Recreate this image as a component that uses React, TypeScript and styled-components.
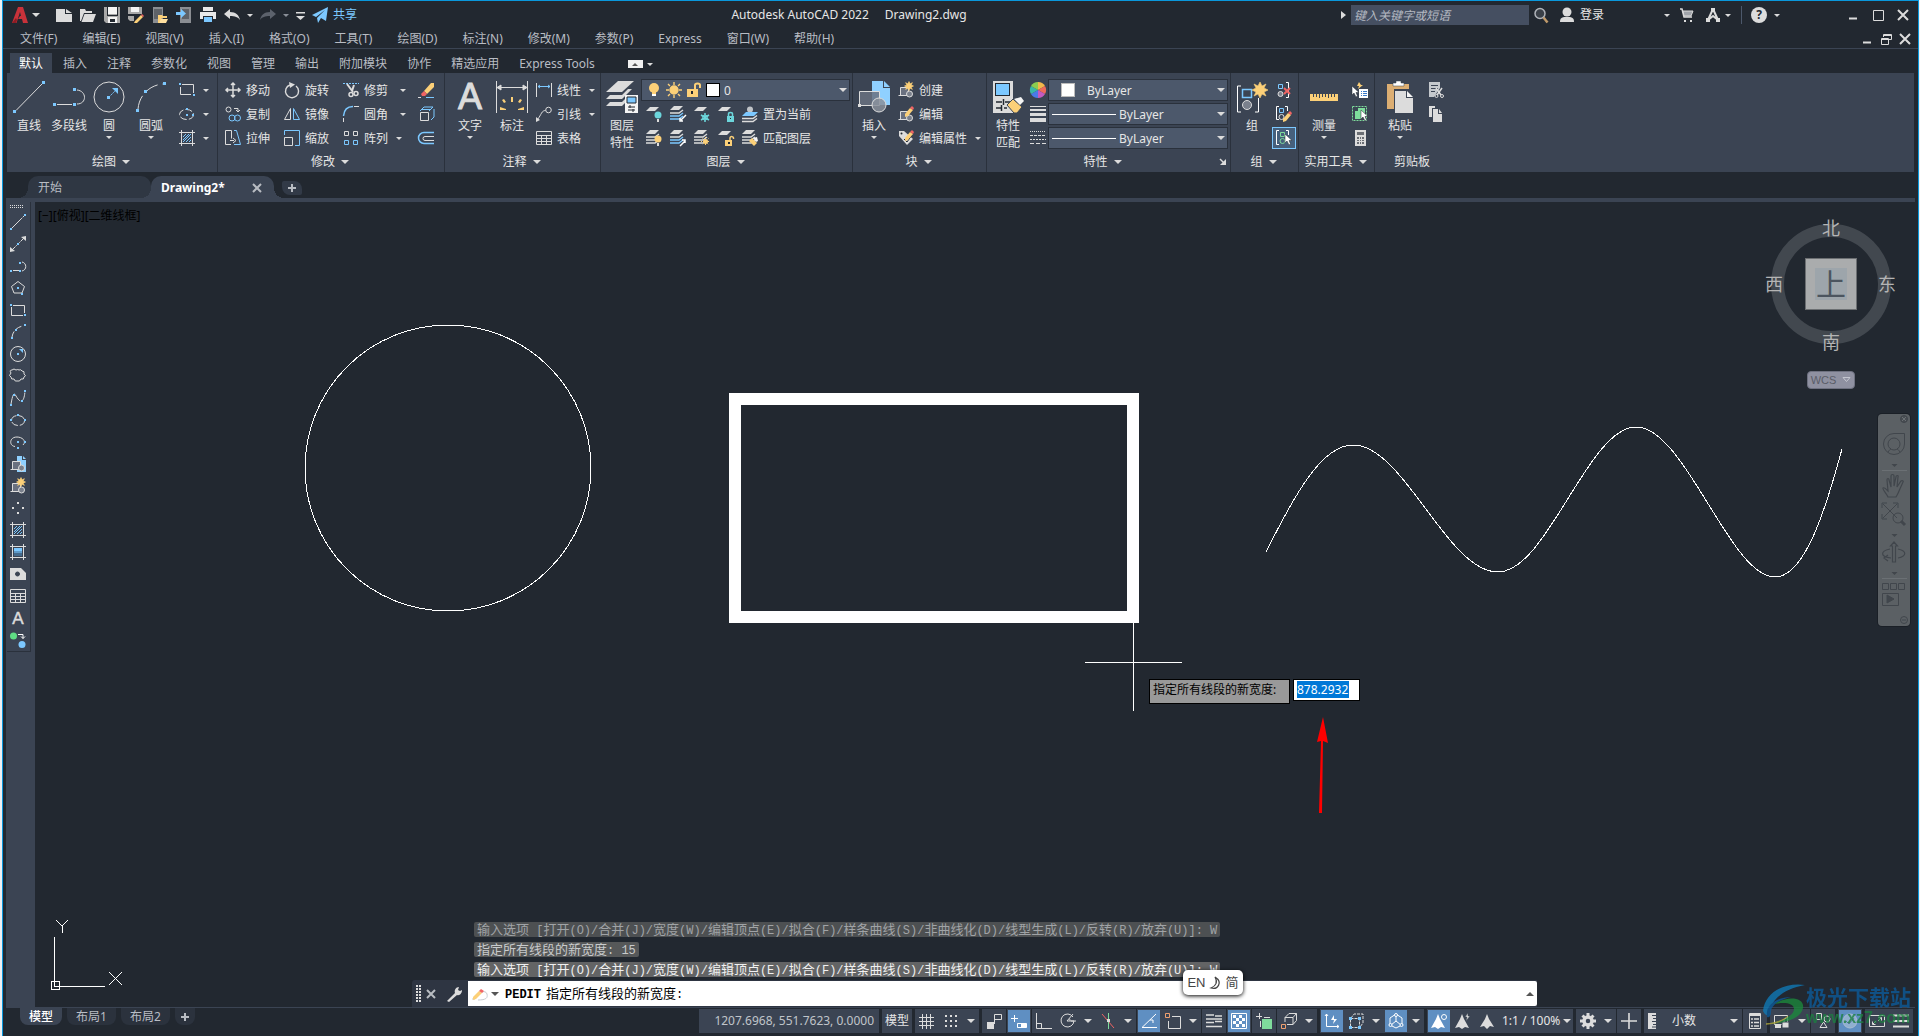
import React from "react";
import styled, { createGlobalStyle, css } from "styled-components";

const C = {
  bg: "#222830",
  bar: "#3b4453",
  field: "#4c586b",
  ink: "#dcdcdc",
  blue: "#7cc8ff",
  yellow: "#fcd078",
  teal: "#6cd6dc",
  green: "#7fdc9c",
  red: "#f06464",
  dark: "#222830",
  active: "#5f8fc2",
};

const UI = `"Noto Sans", "Noto Sans CJK SC", sans-serif`;

const GlobalStyle = createGlobalStyle`
  *, *::before, *::after { box-sizing: border-box; }
  body { margin: 0; background: #eef1f4; font: 12px/16px ${UI}; color: #e6e6e6; overflow: hidden; }
  button, input, select { font: inherit; color: inherit; border: 0; margin: 0; padding: 0; background: none; outline: none; border-radius: 0; }
  button { display: flex; align-items: center; justify-content: center; white-space: nowrap; flex: none; cursor: pointer; }
  svg { display: block; flex: none; overflow: visible; }
`;

/* ---------- icons ---------- */

const sq = (x: number, y: number, s = 2, f = C.blue) => (
  <rect key={`${x}-${y}-${f}`} x={x} y={y} width={s} height={s} fill={f} stroke="none" />
);
const sheet = (y: number, f: string = C.ink, x = 0) => (
  <path key={`s${y}`} d={`M${x + 4} ${y}h9l-4 4h-9z`} fill={f} stroke="none" />
);
const edge = (y: number, f: string = C.ink) => <path key={`e${y}`} d={`M0 ${y}h9l4-3`} stroke={f} strokeWidth="1.4" />;
const pencil = (
  <g stroke="none">
    <path d="M7 12l5-6 3 2-5 6-3 1z" fill={C.yellow} />
    <path d="M12 6l2-2 2 2-1 2z" fill={C.red} />
  </g>
);
const blockShape = (
  <g>
    <path d="M2.500 13.500v-8h8v8h-10" fill="#6a7180" />
    <circle cx="11.500" cy="12" r="3" fill="#7a808c" />
  </g>
);
const star = (x: number, y: number, r: number) => (
  <path
    d={`M${x} ${y - r}l${r * 0.25} ${r * 0.5}l${r * 0.5}-${r * 0.25}l-${r * 0.25} ${r * 0.5}l${r * 0.5} ${r * 0.25}l-${r * 0.5} ${r * 0.25}l${r * 0.25} ${r * 0.5}l-${r * 0.5}-${r * 0.25}l-${r * 0.25} ${r * 0.5}l-${r * 0.25}-${r * 0.5}l-${r * 0.5} ${r * 0.25}l${r * 0.25}-${r * 0.5}l-${r * 0.5}-${r * 0.25}l${r * 0.5}-${r * 0.25}l-${r * 0.25}-${r * 0.5}l${r * 0.5} ${r * 0.25}z`}
    fill={C.yellow}
    stroke={C.yellow}
    strokeWidth="0.6"
  />
);
const cursorArrow = (x: number, y: number) => (
  <path d={`M${x} ${y}v9l2-2 2 4 1.500-1-1.500-3.500h3z`} fill="#fff" stroke={C.dark} strokeWidth="0.5" />
);
const hatchFrame = (fill: React.ReactNode) => (
  <g>
    {fill}
    <path d="M2.500 0v16M13.500 0v16M0 2.500h16M0 13.500h16" />
  </g>
);
const scaleFigure = <path d="M8 1l2 5 5 8-4-1-3 3-3-3-4 1 5-8z" fill={C.ink} stroke="none" />;

const ICONS: Record<string, [number, React.ReactNode]> = {
  logo: [16, <g stroke="none"><path d="M0 16L6 0h5l5 16h-5l-1-4H6l2-3h1L8 5 4.500 16z" fill="#c8323a" /><path d="M0 16l4-5 1 2-1 3z" fill="#8c1c24" /></g>],
  newFile: [16, <g stroke="none" fill={C.ink}><path d="M0 2h9v5h7v8H0z" /><path d="M10 2l6 4h-6z" /></g>],
  open: [16, <path d="M0 2h5l1 2h6v2H4L1 14H0zM4.500 7H16l-3 8H1.500z" fill={C.ink} stroke="none" />],
  save: [16, <g stroke="none"><path d="M0 0h16v16H2l-2-2z" fill="#a8a8a8" /><path d="M4 0h9v7H4zM4 10h9v6H4z" fill="#f4f4f4" /><path d="M6 12h5v3H6z" fill={C.bg} /><path d="M3 0h1v8h9V0h1v9H3z" fill={C.bg} /></g>],
  saveAs: [16, <g stroke="none"><path d="M0 0h14v7H0zM0 9h6v5H2l-2-2z" fill="#a8a8a8" /><path d="M3 0h8v5H3z" fill="#f4f4f4" /><path d="M7 14l6-6 2 2-6 6H6z" fill={C.yellow} /><path d="M13 8l1-1 2 2-1 1z" fill={C.red} /></g>],
  webOpen: [16, <g stroke="none"><path d="M1 0h10v16H1z" fill="#8a8d92" /><path d="M2 2h8v10H2z" fill="#5e6268" /><path d="M6 8h4l1 1h4v2h-5l-2 5H6z" fill={C.yellow} /><path d="M9 12h7l-2 4H7z" fill="#ffe0a0" /></g>],
  webSave: [16, <g stroke="none"><path d="M4 0h11v16H4z" fill="#8a8d92" /><path d="M6 2h7v10H6z" fill="#5e6268" /><path d="M0 5h5V2l5 4.500L5 11V8H0z" fill={C.blue} /></g>],
  print: [16, <g stroke="none"><path d="M3 0h10v4H3zM0 5h16v7H0z" fill="#e8e8e8" /><path d="M3 9h10v6H3z" fill={C.bg} /><path d="M4 10h8v5H4z" fill={C.blue} /></g>],
  undo: [16, <path d="M0 7l6-5v3c6 0 9 3 10 8-2-3-5-4-10-4v3z" fill={C.ink} stroke="none" />],
  redo: [16, <path d="M16 7l-6-5v3C4 5 1 8 0 13c2-3 5-4 10-4v3z" fill="#5c626c" stroke="none" />],
  customise: [16, <g stroke="none" fill={C.ink}><path d="M4 5h9v1.500H4z" /><path d="M4 9h9l-4.500 4z" /></g>],
  plane: [16, <g stroke="none" fill={C.blue}><path d="M0 8L16 0l-2 14-5-3-3 5-1-5 8-8-9 7z" /></g>],
  search: [16, <g><circle cx="7" cy="6.500" r="5" stroke="#b0b4ba" strokeWidth="1.500" fill="#3a4048" /><path d="M10.500 10.500l4 5" stroke="#c09a6a" strokeWidth="2.500" /></g>],
  user: [16, <g stroke="none" fill={C.ink}><circle cx="8" cy="5" r="4.500" /><path d="M1 15c0-5 3-5 7-5s7 0 7 5z" /></g>],
  cart: [16, <g><path d="M1 2h2l2 8h8" strokeWidth="1.500" /><path d="M4 4h10l-2 5H5z" fill="#a0a4aa" /><path d="M5 13h2v2H5zM11 13h2v2h-2z" fill={C.ink} stroke="none" /></g>],
  appStore: [16, <g><path d="M8 2l-5 11M8 2l5 11M3 13l5-4 5 4" strokeWidth="2" /><path d="M6 1h4v4H6zM1 11h4v4H1zM11 11h4v4h-4z" fill={C.ink} stroke="none" /></g>],
  min: [12, <path d="M2 9.500h8" strokeWidth="2" />],
  max: [12, <path d="M1.500 1.500h10v10h-10z" />],
  close: [12, <path d="M1 1l10 10M11 1L1 11" strokeWidth="2" />],
  restore: [12, <path d="M3.500 4V1.500h8v5H9M1.500 5.500h7v6h-7zM1 6.500h8M3 2.500h9" />],
  line32: [32, <g><path d="M3 29.500L29 3" />{sq(0, 29, 3)}{sq(29, 0, 3)}</g>],
  pline32: [32, <g><path d="M4 23.500h15M24 9c10 1 10 14 0 14" />{sq(0, 22, 3)}{sq(20, 22, 3)}{sq(20, 7, 3)}</g>],
  circle32: [32, <g><circle cx="16" cy="16" r="15" /><path d="M16 16l7-7" stroke={C.blue} strokeDasharray="2 1" />{sq(14, 15, 3)}<path d="M25 7v6l-6-6z" fill={C.blue} stroke="none" /></g>],
  arc32: [32, <g><path d="M3 28C4 15 14 4 28 3" strokeDasharray="14 5" />{sq(1, 28, 3)}{sq(9, 9, 3)}{sq(28, 1, 3)}</g>],
  rect: [16, <g><path d="M3 2.500h11.500V11M1.500 5v7.500H12" />{sq(0, 1)}{sq(14, 12)}</g>],
  rectBar: [16, <g><path d="M3 3.500h11.500V11M1.500 5v8.500H13" />{sq(0, 2)}{sq(14, 12)}</g>],
  ellipse: [16, <g><ellipse cx="7.500" cy="8.500" rx="7" ry="5" strokeDasharray="7 2" />{sq(7, 8)}{sq(7, 2)}{sq(13, 8)}</g>],
  ellipse2: [16, <g><ellipse cx="8" cy="8.500" rx="6.500" ry="5" strokeDasharray="7 2" />{sq(0, 7)}{sq(7, 2)}{sq(14, 7)}</g>],
  ellArc: [16, <g><path d="M13 11c4-4-1-8-6-8C-1 3-1 12 5 12.500" />{sq(7, 7)}{sq(14, 7)}{sq(7, 13)}</g>],
  hatch: [16, hatchFrame(<path d="M4 7l3-3M4 10l6-6M4 12l8-8M7 12l5-5M10 12l2-2" stroke={C.blue} />)],
  gradient: [16, hatchFrame(<g stroke="none"><rect x="4" y="4" width="8" height="3" fill="#7cc8ff" /><rect x="4" y="7" width="8" height="2" fill="#5f9ac8" /><rect x="4" y="9" width="8" height="3" fill="#456a8c" /></g>)],
  move: [16, <g strokeWidth="1.500"><path d="M8 1v14M1 8h14M6 3l2-2 2 2M6 13l2 2 2-2M3 6L1 8l2 2M13 6l2 2-2 2" /></g>],
  rotate: [16, <g strokeWidth="1.400"><path d="M6 3a6.500 6.500 0 1 0 6 1" /><path d="M5 0l6 2.500L6 6z" fill={C.ink} stroke="none" /></g>],
  trim: [16, <g><path d="M0 1.500h16" stroke={C.blue} strokeDasharray="2 1" /><path d="M4 2l6 8M11 3L9 9" strokeWidth="2" /><circle cx="8" cy="12.500" r="2" strokeWidth="1.500" /><circle cx="13" cy="11.500" r="2" strokeWidth="1.500" /></g>],
  erase: [16, <g stroke="none"><path d="M6 9l7-8h3v4l-7 7z" fill={C.yellow} /><path d="M3 12l3-3 3 3-2 2H4z" fill={C.red} /><path d="M0 15h3v1H0z" fill={C.ink} /><path d="M8 15h8v1H8z" fill={C.blue} /></g>],
  copy: [16, <g><circle cx="3.500" cy="3.500" r="2.500" /><path d="M9 2.500h4v3M11 4l2 2 2-2" /><circle cx="7" cy="12" r="3" stroke={C.blue} /><circle cx="12.500" cy="12" r="3" stroke={C.blue} /></g>],
  mirror: [16, <g><path d="M6.500 2.500v11h-6z" /><path d="M9.500 2.500v11h6z" stroke={C.blue} /></g>],
  fillet: [16, <g><path d="M.5 16v-4M11 .5h5" /><path d="M.5 10C1 4 4 .5 10 .5" stroke={C.blue} strokeWidth="1.500" /></g>],
  explode: [16, <g><path d="M2.500 6.500h8v8h-8z" fill="none" /><path d="M2 5l4-4h9M11 5l4-4M13 14l3-3V3M3 3.500h10" stroke={C.blue} /></g>],
  stretch: [16, <g><path d="M.5 14.500V.5h6v8M.5 14.500H6M5 10.500h4M8 8l3 2.500L8 13" /><path d="M9 .5h2.500l4 14H9" stroke={C.blue} /></g>],
  scale: [16, <g><path d="M.5 7.500h8v8h-8z" /><path d="M.5 5V.5h15v15H11" stroke={C.blue} /></g>],
  array: [16, <g><path d="M1.500 1.500h4v4h-4zM10.500 1.500h4v4h-4z" /><path d="M1.500 10.500h4v4h-4zM10.500 10.500h4v4h-4z" stroke={C.blue} /></g>],
  offset: [16, <g><path d="M16 2.500H6a5 5 0 0 0 0 11h10" stroke={C.blue} strokeWidth="1.500" /><path d="M16 6.500H7a2 2 0 0 0 0 4h9" /></g>],
  text32: [32, <text x="16" y="28" textAnchor="middle" fontFamily="Liberation Sans" fontSize="36" fill={C.ink} stroke={C.ink}>A</text>],
  dim32: [32, <g><path d="M.5 0v32M31.500 0v32M2 6.500h28" /><path d="M5 4v5L1 6.500zM27 4v5l4-2.500z" fill={C.ink} /><path d="M15 21v-5h2v5zM8 22l-2-3 2-1 2 3zM24 22l2-3-2-1-2 3zM4 26l6 2v1H4zM28 26l-6 2v1h6zM10 25l-4-2" fill={C.yellow} stroke="none" /></g>],
  linear: [16, <g><path d="M.5 1v14M15.500 1v14" /><path d="M2 4.500h12M4 3L2 4.500 4 6M12 3l2 1.500L12 6" stroke={C.blue} /></g>],
  leader: [16, <g><circle cx="12.500" cy="4" r="2.800" /><path d="M9.500 4.500c-4 0-4 4-8 9" /><path d="M0 16v-5l4 3z" fill={C.ink} stroke="none" /></g>],
  table: [16, <path d="M.5 1.500h15v13H.5zM.5 5.500h15M.5 8.500h15M.5 11.500h15M5.500 5v10M10.500 5v10" />],
  layers32: [32, <g stroke="none"><path d="M12 0h16L16 11H0z" fill={C.ink} /><path d="M0 18l4-4h12l6-6h4L16 18zM0 25l4-4h12l4-4v4l-4 4z" fill={C.ink} /><path d="M19 14h13v18H19z" fill="#f4f4f4" /><path d="M21 16h9v6h-9z" fill={C.blue} stroke={C.dark} /><path d="M22 26h7M22 29h7M24 24v3M27 28v3" stroke={C.dark} /></g>],
  bulb: [16, <g stroke="none"><circle cx="8" cy="6" r="5" fill={C.yellow} /><path d="M6 9h4v3H6z" fill={C.yellow} /><path d="M6 12h4v2H6z" fill="#fff" /></g>],
  sun: [16, <g stroke={C.yellow} strokeWidth="1.400"><circle cx="8" cy="8" r="4" fill={C.yellow} /><path d="M8 0v3M8 13v3M0 8h3M13 8h3M2 2l2 2M14 2l-2 2M2 14l2-2M14 14l-2-2" /></g>],
  unlock: [16, <g><path d="M1 7h11v8H1z" fill={C.yellow} stroke="none" /><path d="M9 7V3c0-2 5-2 5 0v3" stroke={C.yellow} strokeWidth="2" /><path d="M6 9v3" stroke={C.dark} strokeWidth="2" /></g>],
  layOff: [16, <g>{sheet(1)}<g stroke="none"><circle cx="12" cy="9" r="3.500" fill={C.teal} /><path d="M11 13h2v3h-2z" fill={C.ink} /></g></g>],
  layIso: [16, <g>{sheet(0)}{edge(7, C.ink)}{edge(10, C.blue)}{edge(13, C.blue)}<path d="M16 9l-5 5M10 12v3h3" strokeWidth="1.500" stroke="#fff" /></g>],
  layFrz: [16, <g>{sheet(1)}<path d="M11 7v9M7 9l8 5M15 9l-8 5" stroke={C.teal} strokeWidth="1.500" /><circle cx="11" cy="11.500" r="2.500" stroke={C.teal} /></g>],
  layLock: [16, <g>{sheet(1)}<path d="M9 10h7v6H9z" fill={C.teal} stroke="none" /><path d="M10.500 10V8c0-2 4-2 4 0v2" stroke={C.teal} strokeWidth="1.500" />{sq(12, 12, 1, C.dark)}</g>],
  layCur: [16, <g><circle cx="8" cy="3.500" r="3" fill="#c0c4c8" stroke="none" /><path d="M4 6h12l-4 4H0z" fill={C.blue} stroke="none" /><path d="M0 12.500h11l4-3M0 15.500h11l4-3" strokeWidth="1.500" /></g>],
  layOn: [16, <g>{sheet(0)}{edge(7)}{edge(10)}{edge(13)}<g stroke="none"><circle cx="12" cy="9" r="3.500" fill={C.yellow} /><path d="M11 13h2v3h-2z" fill={C.ink} /></g></g>],
  layUniso: [16, <g>{sheet(0)}{edge(7)}{edge(10, C.blue)}{edge(13, C.blue)}<path d="M10 16l5-5M12 10h3v3" strokeWidth="1.500" stroke="#fff" /></g>],
  layThaw: [16, <g>{sheet(0)}{edge(7)}{edge(10)}{edge(13)}<circle cx="11.500" cy="11.500" r="2.500" fill={C.yellow} stroke="none" /><path d="M11.500 7v9M7 11.500h9M8.500 8.500l6 6M14.500 8.500l-6 6" stroke={C.yellow} strokeDasharray="1 6" /></g>],
  layUnlock: [16, <g>{sheet(1)}<path d="M7 10h7v6H7z" fill={C.yellow} stroke="none" /><path d="M12 10V8c0-2 4-2 3.500 1" stroke={C.yellow} strokeWidth="1.500" />{sq(10, 12, 2, C.dark)}</g>],
  layMatch: [16, <g>{sheet(0)}{edge(7)}{edge(10)}{edge(13)}<path d="M7 11l3-3 5 5-3 3z" fill={C.yellow} stroke="none" /><path d="M11 8l4-1 1 4-2 1z" fill="#f4f4f4" stroke="none" /></g>],
  insert32: [32, <g><path d="M14 0h11v7h7v17H14z" fill="#8fd0ff" stroke="none" /><path d="M26 0l6 6h-6z" fill="#8fd0ff" stroke="none" /><path d="M1.500 25V10.500h20v14H0" fill="#6a7180" fillOpacity=".85" /><circle cx="21" cy="24" r="7" fill="#8a8f9a" fillOpacity=".85" />{sq(0, 23, 3, C.ink)}</g>],
  blkCreate: [16, <g>{blockShape}{star(11, 4, 4.5)}</g>],
  blkEdit: [16, <g>{blockShape}<g transform="translate(0 -4)">{pencil}</g></g>],
  blkAttr: [16, <g><path d="M1 1h5l9 8-6 6-8-9z" fill={C.ink} stroke="none" /><path d="M6 9l3 3 5-7" stroke={C.dark} /><circle cx="3.500" cy="3.500" r="1" fill={C.dark} stroke="none" /><g transform="translate(0 -4)">{pencil}</g></g>],
  match32: [32, <g stroke="none"><path d="M1 0h20v32H1z" fill={C.ink} /><path d="M3 2h15v13H3z" fill={C.dark} /><path d="M4 3h13v11H4z" fill={C.blue} /><path d="M4 21h6M13 21h5M4 27h5M12 27h3M11.500 18v6M9.500 24v6" stroke={C.dark} strokeWidth="1.500" /><path d="M15 24l6-6 9 8-5 6h-3z" fill={C.yellow} stroke={C.bar} /><path d="M22 18l7-2 3 4-4 4z" fill="#f4f4f4" /></g>],
  wheel: [16, <g stroke="none"><path d="M8 8V0a8 8 0 0 1 7 4z" fill="#f2b84a" /><path d="M8 8l7-4a8 8 0 0 1 0 8z" fill="#ef6a5a" /><path d="M8 8l7 4a8 8 0 0 1-7 4z" fill="#c45ac0" /><path d="M8 8v8a8 8 0 0 1-7-4z" fill="#4a7ae8" /><path d="M8 8l-7 4a8 8 0 0 1 0-8z" fill="#3ab8a8" /><path d="M8 8L1 4a8 8 0 0 1 7-4z" fill="#8ccc50" /></g>],
  lweight: [16, <g stroke="none" fill={C.ink}><path d="M0 0h16v1H0zM0 3h16v2H0zM0 7h16v3H0zM0 12h16v4H0z" /></g>],
  ltype: [16, <g><path d="M0 1.500h16" strokeDasharray="1 1" /><path d="M0 5.500h16" strokeDasharray="3 1" /><path d="M0 9.500h16" strokeDasharray="2 1" /><path d="M0 13.500h16" strokeDasharray="4 2" /></g>],
  group32: [32, <g><path d="M5 5H1.500v26H5M19 31h3.500V17" stroke="#fff" /><path d="M6.500 8.500h9v8h-9z" stroke={C.blue} strokeWidth="1.500" /><circle cx="11" cy="24" r="4.500" fill="#7a808c" />{star(24, 9, 8)}</g>],
  ungroup: [16, <g><path d="M10 .5h2.500v15H10" stroke="#fff" /><path d="M2.500 2.500h4v4h-4z" stroke={C.blue} /><circle cx="4.500" cy="12" r="2.500" fill="#7a808c" /><path d="M8 6l6 6M14 6l-6 6" stroke={C.red} strokeWidth="2" /></g>],
  groupEdit: [16, <g><path d="M3 .5H.5v13H3M9 .5h2.500V5" stroke="#fff" /><path d="M3.500 2.500h4v4h-4z" stroke={C.blue} /><circle cx="5.500" cy="11" r="2.500" /><g transform="translate(0 1)">{pencil}</g></g>],
  groupSel: [16, <g><path d="M3 .5H.5v14H3M10 .5h2.500V5" stroke="#fff" /><path d="M4.500 2.500h4v4h-4z" stroke={C.green} /><circle cx="6.500" cy="11" r="2.500" stroke={C.green} />{cursorArrow(9, 4)}</g>],
  ruler32: [32, <g><path d="M2 13h28v7H2z" fill={C.yellow} stroke="none" /><path d="M5.500 13v3M8.500 13v3M11.500 13v4M14.500 13v3M17.500 13v3M20.500 13v4M23.500 13v3M26.500 13v3" stroke={C.bar} /></g>],
  quickSel: [16, <g>{cursorArrow(0, 4)}<path d="M7 0l-2 4h2l-1 3 5-4H9z" fill={C.yellow} stroke="none" /><path d="M7 7h9v9H7z" fill="#fff" stroke="none" /><path d="M9 9.500h1M11 9.500h4M9 11.500h1M11 11.500h4M9 13.500h1M11 13.500h4" stroke="#3a7ac8" /></g>],
  selAll: [16, <g><path d="M.5.5h14v14H.5z" stroke={C.green} strokeDasharray="2 1" /><path d="M3 5h3V2h7v8H9v3H3z" fill={C.green} stroke="none" />{cursorArrow(9, 4)}</g>],
  calc: [16, <g stroke="none"><path d="M3 0h11v16H3z" fill={C.ink} /><path d="M5 2h7v3H5zM5 7h2v2H5zM8 7h1v2H8zM10 7h2v2h-2zM5 10h2v1H5zM8 10h1v1H8zM10 10h2v1h-2zM5 12h2v2H5zM8 12h1v2H8zM10 12h2v2h-2z" fill="#6a6e74" /></g>],
  paste32: [32, <g stroke="none"><path d="M3 3h22v5H10v20H3z" fill="#dcae72" /><path d="M9 2h3V0h5v2h3v3H9z" fill="#fff" stroke={C.bar} strokeWidth=".5" /><path d="M11 10h11v7h7v15H11z" fill={C.ink} /><path d="M23 10l6 6h-6z" fill="#f4f4f4" /></g>],
  cut: [16, <g><path d="M1 0h11v6L6 15H1z" fill="#c4c8cc" stroke="none" /><path d="M3 3.500h7M3 6.500h7M3 9.500h4" stroke={C.bar} /><path d="M8 6l5 7M14 6l-5 7" strokeWidth="1.500" /><circle cx="8.500" cy="14" r="1.500" /><circle cx="14" cy="14" r="1.500" /></g>],
  copyClip: [16, <g stroke="none" fill={C.ink}><path d="M1 0h6v2H4v9H1z" /><path d="M5 3h5v5h4v8H5z" /><path d="M11 3l3 4h-3z" /></g>],
  lineBar: [16, <g><path d="M2 14L14 2" strokeDasharray="14 1" />{sq(0, 14)}{sq(14, 0)}</g>],
  xline: [16, <g><path d="M2 14L14 2" strokeDasharray="5 1" /><path d="M0 16v-5l5 4zM16 0v5l-5-4z" fill={C.ink} stroke="none" />{sq(7, 7)}</g>],
  plineBar: [16, <g><path d="M3 12.500h6M12 4c5 1 5 8 0 9" />{sq(0, 12)}{sq(9, 12)}{sq(9, 4)}</g>],
  polygon: [16, <g><path d="M8 1.500l6.500 5L12 13H4L1.500 6.500z" />{sq(7, 7)}{sq(11, 13)}</g>],
  arcBar: [16, <g><path d="M2 13C3 7 7 3 13 2" strokeDasharray="6 3" />{sq(1, 13)}{sq(5, 5)}{sq(14, 0)}</g>],
  circleBar: [16, <g><circle cx="8" cy="8" r="7.500" />{sq(7, 7)}<path d="M13 3v4L9 3z" fill={C.blue} stroke="none" /></g>],
  cloud: [16, <path d="M1 5Q-1 2 2 2q2-2 4 0 2-1 3 0 2-1 3 1 3 0 2 3 3 2 0 3 0 3-3 2-1 3-4 2-2 1-3-2-3 1-3-2-3-1 0-4z" />],
  spline: [16, <g><path d="M1 14C3 3 4 2 6 6c4 7 8 8 9-5" strokeDasharray="9 2" />{sq(0, 14)}{sq(3, 4)}{sq(11, 10)}{sq(14, 0)}</g>],
  insertBar: [16, <g><path d="M7 0h5v4h4v12H7z" fill="#8fd0ff" stroke="none" /><path d="M13 0l3 3h-3z" fill="#8fd0ff" stroke="none" />{blockShape}</g>],
  points: [16, <g>{sq(7, 2, 2, C.ink)}{sq(2, 7, 2, C.ink)}{sq(12, 7, 2, C.ink)}{sq(7, 12, 2, C.ink)}</g>],
  region: [16, <g><path d="M0 2h11l5 5v7H0z" fill={C.ink} stroke="none" /><circle cx="7.500" cy="8" r="2" fill={C.bar} stroke={C.bar} /></g>],
  textBar: [16, <text x="8" y="14" textAnchor="middle" fontFamily="Liberation Sans" fontSize="17" fill={C.ink} stroke={C.ink} strokeWidth=".5">A</text>],
  addSel: [16, <g><circle cx="3.500" cy="4" r="3.500" fill="#5fdc84" stroke="none" /><circle cx="12" cy="12.500" r="3.500" fill="#7cc8ff" stroke="none" /><path d="M8 2.500h5v4M11 4.500l2 2 2-2" stroke="#fff" /></g>],
  grid: [16, <path d="M0 4.500h15M0 8.500h15M0 12.500h15M3.500 1v15M7.500 1v15M11.500 1v15" />],
  snap: [16, <path d="M2 3h2M7 3h2M12 3h2M2 8h2M7 8h2M12 8h2M2 13h2M7 13h2M12 13h2" strokeWidth="2" />],
  infer: [16, <g><path d="M1 9h7v7H1z" fill={C.ink} stroke="none" /><path d="M8.500 11V1.500h7v5H9" /></g>],
  dyn: [16, <g stroke="#fff"><path d="M0 5.500h7M3.500 2v7" /><path d="M6.500 10.500h9v4h-9z" fill="#fff" />{sq(7, 11, 3, "#5f8fc2")}</g>],
  ortho: [16, <path d="M.5 0v15.500H16M.5 10.500h5v5" />],
  polar: [16, <path d="M13 4a6.500 6.500 0 1 0 1 4H7l6-7M10 8c0-1 0-2-1-2.500M11 8h5" />],
  iso: [16, <g><path d="M2 1l12 14" stroke={C.red} /><path d="M8.500 0v16" stroke={C.green} />{sq(7, 6, 3, C.ink)}</g>],
  otrack: [16, <path d="M15 1L1 14.500h15M9 7h3v3" stroke="#fff" />],
  osnap: [16, <g><path d="M7 3.500h8.500v12h-12V8" /><path d="M.5.5h4v4h-4z" stroke="#f0a070" /></g>],
  lwt: [16, <path d="M0 2h8M9 3h7M0 6h16M0 9.500h8M9 8.500h7M0 13.500h16" strokeWidth="1.700" />],
  transp: [16, <g><path d="M.5.5h15v15H.5z" stroke="#fff" /><path d="M2 2h3v3H2zM8 2h3v3H8zM5 5h3v3H5zM11 5h3v3h-3zM2 8h3v3H2zM8 8h3v3H8zM5 11h3v3H5zM11 11h3v3h-3z" fill="#fff" stroke="none" /></g>],
  cycle: [16, <g><path d="M6 6h10v10H6z" fill={C.green} stroke="none" /><path d="M0 3.500h6M3.500 0v6M4.500 14V8M8 4.500h6" /></g>],
  osnap3d: [16, <g><path d="M4 9V4.500L8 .5h7.500v7L12 11.500H6M4 4.500h8v7M12 4.500l3.500-4" /><path d="M.5 11.500h4v4h-4z" stroke="#f0a070" /></g>],
  ucs: [16, <g stroke="#fff"><path d="M2.500 1v12.500H15M1 3l1.500-2L4 3M13 12l2 1.500-2 1.500" /><path d="M10 2L7 7h3l-1 4 4-5h-3z" fill="#fff" stroke="none" /></g>],
  filter: [16, <g><path d="M2.500 5.500h9v9h-9zM3 5l3-4h9v9l-3 4" strokeDasharray="3 1" />{sq(1, 4, 3)}{sq(10, 4, 3)}{sq(1, 13, 3)}{sq(10, 13, 3)}</g>],
  gizmo: [16, <g stroke="#fff"><path d="M8 1l6 4v7l-6 3-6-3V5zM8 2v6l5 4M8 8l-5 4" /><circle cx="8" cy="2" r="1.500" fill={C.active} /><circle cx="2.500" cy="12" r="1.500" fill={C.active} /><circle cx="13.500" cy="12" r="1.500" fill={C.active} /></g>],
  annoVis: [16, <g><path d="M7 1l2 5 5 9-4-1-3 2-3-2-4 1 5-9z" fill="#fff" stroke="none" /><circle cx="13" cy="4" r="2.500" stroke="#fff" /></g>],
  annoAuto: [16, <g><path d="M7 1l2 5 5 9-4-1-3 2-3-2-4 1 5-9z" fill={C.ink} stroke="none" /><path d="M13 0l-3 4h2l-1 4 4-5h-2z" fill={C.ink} stroke={C.bar} strokeWidth=".5" /></g>],
  annoScale: [16, scaleFigure],
  gear: [16, <g><circle cx="8" cy="8" r="4" strokeWidth="3.500" /><path d="M8 0v3M8 13v3M0 8h3M13 8h3M2.500 2.500l2 2M13.500 2.500l-2 2M2.500 13.500l2-2M13.500 13.500l-2-2" strokeWidth="3" /></g>],
  plus: [16, <path d="M8 0v16M0 8h16" strokeWidth="1.600" />],
  units: [16, <g><path d="M0 0h8v16H0z" fill={C.ink} stroke="none" /><path d="M4 2.500h4M5 5.500h3M4 8.500h4M5 11.500h3M4 14h4" stroke={C.bar} /></g>],
  props: [16, <g><path d="M2.500.5h11v15h-11z" /><path d="M2 2h12" strokeWidth="2" /><path d="M4 6h2M7 6h5M4 9.500h2M7 9.500h5M4 13h2M7 13h5" strokeWidth="1.500" /></g>],
  lockUi: [16, <g><path d="M.5 2.500h13v9H.5z" /><path d="M8 9h7v6H8z" fill={C.ink} stroke={C.bar} /><path d="M10 9V7c0-2 4-2 4 0" /><path d="M1 12h6v3H1z" fill={C.ink} stroke="none" /></g>],
  isolate: [16, <g><path d="M1.500.5h5v6h-5zM5 14.500h7L8.500 9z" /><circle cx="12" cy="6" r="3" /></g>],
  perf: [16, <g><circle cx="8" cy="8" r="7" fill="#8fb0d0" stroke="#a8bcd0" /><path d="M4 8l3 3 5-6" stroke="#54789c" /></g>],
  clean: [16, <g><path d="M.5 2.500h15v11H.5z" /><path d="M12 5L9 8M9.500 4.500h3v3M4 11l3-3M3.500 8.500v3h3" /></g>],
  menu: [16, <path d="M0 2.500h16M0 8h16M0 13.500h16" strokeWidth="2" />],
  wrench: [16, <path d="M1 15l8-8c-1-3 1-6 4-6l-1 3 2 1 2-1c0 3-2 6-5 5l-8 7z" fill={C.ink} stroke="none" />],
  pedit: [16, <g><path d="M0 13h3M6 14c8 0 10-2 9-6-.5-2-3-3-5-2" stroke="#c8ccd0" /><path d="M1 11l6-6 3 2-6 6-3 1z" fill={C.yellow} stroke="none" /><path d="M7 5l2-2 3 2-2 2z" fill={C.red} stroke="none" /></g>],
  tabClose: [10, <path d="M1 1l8 8M9 1L1 9" strokeWidth="2" stroke="#b8bcc2" />],
  tabPlus: [10, <path d="M5 1v8M1 5h8" strokeWidth="2" stroke="#b8bcc2" />],
  launcher: [8, <g><path d="M1 1l4 4" strokeWidth="1.500" /><path d="M7 1v6H1z" fill={C.ink} stroke="none" /></g>],
};

const Icon = ({ n }: { n: string }) => {
  const [size, body] = ICONS[n];
  return (
    <svg width={size} height={size} viewBox={`0 0 ${size} ${size}`} fill="none" stroke={C.ink} aria-hidden="true">
      {body}
    </svg>
  );
};

const Caret = styled.span<{ $big?: boolean; $up?: boolean; $color?: string }>`
  flex: none;
  width: 0;
  height: 0;
  border: solid transparent;
  border-width: ${(p) => (p.$big ? "0 4px" : "0 3px")};
  ${(p) => (p.$up ? "border-bottom" : "border-top")}: ${(p) => (p.$big ? 4 : 3)}px solid ${(p) => p.$color ?? C.ink};
`;

/* ---------- window frame ---------- */

const Frame = styled.div`
  position: relative;
  display: flex;
  flex-direction: column;
  height: 100vh;
  margin: 0 1px 0 2px;
  border: 1px solid #0a98dc;
  border-bottom: 0;
  background: ${C.bg};
`;

const TitleBar = styled.header`
  display: flex;
  align-items: center;
  height: 28px;
  padding: 0 3px 0 9px;
`;
const TitleText = styled.h1`
  flex: 1;
  display: flex;
  justify-content: center;
  gap: 16px;
  margin: 0;
  font-size: 12px;
  font-weight: 400;
  white-space: nowrap;
`;
const Slot = styled.button<{ $w?: number }>`
  width: ${(p) => p.$w ?? 24}px;
  height: 24px;
`;
const LogoButton = styled.button`
  gap: 4px;
  margin-right: 12px;
`;
const ShareButton = styled.button`
  gap: 5px;
  padding-left: 4px;
  color: ${C.blue};
`;
const SideTri = styled.span`
  width: 0;
  height: 0;
  margin-right: 5px;
  border: 4px solid transparent;
  border-width: 4px 0 4px 5px;
  border-left-color: ${C.ink};
`;
const SearchInput = styled.input`
  width: 178px;
  height: 20px;
  padding: 0 3px;
  background: #454f61;
  &::placeholder {
    color: #b4b9c2;
    font-style: italic;
    opacity: 1;
  }
`;
const LoginButton = styled.button`
  gap: 5px;
  padding-left: 5px;
  margin-right: 60px;
`;
const Divider = styled.i`
  width: 1px;
  height: 18px;
  margin: 0 5px 0 7px;
  background: #4c586b;
`;
const Help = styled.span`
  width: 16px;
  height: 16px;
  border-radius: 8px;
  background: ${C.ink};
  color: ${C.bg};
  font-weight: 700;
  text-align: center;
`;
const WindowButtons = styled.div`
  display: flex;
  gap: 1px;
  margin-left: 58px;
`;

const MenuBar = styled.nav`
  display: flex;
  align-items: center;
  gap: 1px;
  height: 20px;
  padding: 0 4px 0 5px;
  border-bottom: 1px solid ${C.bar};
`;
const MenuItem = styled.button`
  padding: 0 12px;
  color: #b9bdc4;
`;
const Spacer = styled.span`
  flex: 1;
`;

const RibbonTabs = styled.div`
  display: flex;
  align-items: flex-end;
  gap: 2px;
  height: 24px;
  padding-left: 7px;
`;
const RibbonTab = styled.button<{ $active?: boolean }>`
  height: 20px;
  padding: 2px 9px 0;
  color: ${(p) => (p.$active ? "#fff" : "#b9bdc4")};
  background: ${(p) => (p.$active ? C.bar : "none")};
`;
const RibbonToggle = styled.button`
  align-self: center;
  gap: 4px;
  margin: 6px 0 0 22px;
`;
const ToggleFace = styled.span`
  display: flex;
  align-items: center;
  justify-content: center;
  width: 15px;
  height: 8px;
  background: #f0f0f0;
`;

/* ---------- ribbon ---------- */

const Ribbon = styled.section`
  display: flex;
  height: 99px;
  margin: 0 4px;
  background: ${C.bar};
`;
const Panel = styled.div<{ $w: number }>`
  display: flex;
  flex-direction: column;
  flex: 0 0 ${(p) => p.$w}px;
  border-right: 1px solid #2a313c;
  &:last-child {
    border-right: 0;
  }
`;
const PanelBody = styled.div<{ $pad?: number }>`
  display: flex;
  height: 77px;
  padding: 5px 0 0 ${(p) => p.$pad ?? 2}px;
`;
const PanelTitle = styled.div`
  display: flex;
  align-items: center;
  height: 22px;
  padding: 2px 2px 0 0;
`;
const PanelTitleButton = styled.button`
  flex: 1;
  gap: 6px;
`;
const Big = styled.button<{ $w: number }>`
  flex-direction: column;
  justify-content: flex-start;
  width: ${(p) => p.$w}px;
  padding-top: 3px;
`;
const BigLabel = styled.span`
  margin: 4px 0 2px;
  line-height: 17px;
  white-space: pre;
`;
const Column = styled.div<{ $w?: number; $ml?: number }>`
  display: flex;
  flex-direction: column;
  flex: none;
  width: ${(p) => (p.$w ? `${p.$w}px` : "auto")};
  margin-left: ${(p) => p.$ml ?? 0}px;
`;
const Row = styled.div<{ $gap?: number }>`
  display: flex;
  align-items: center;
  gap: ${(p) => p.$gap ?? 8}px;
  height: 24px;
`;
const Small = styled.button<{ $on?: boolean }>`
  gap: 5px;
  height: 22px;
  ${(p) =>
    p.$on &&
    css`
      width: 24px;
      margin-left: -4px;
      border: 1px solid ${C.blue};
      background: #46607c;
    `}
`;
const Caption = styled.span`
  padding-top: 2px;
`;
const Combo = styled.div<{ $pad: number; $gap: number }>`
  position: relative;
  display: flex;
  align-items: center;
  gap: ${(p) => p.$gap}px;
  height: 22px;
  padding-left: ${(p) => p.$pad}px;
  border: 1px solid #2a313c;
  background: ${C.field};
  select {
    flex: 1;
    height: 20px;
    min-width: 0;
    padding-top: 2px;
    appearance: none;
  }
  option {
    background: ${C.field};
  }
  & > span:last-child {
    position: absolute;
    right: 2px;
    pointer-events: none;
  }
`;
const Swatch = styled.i<{ $border: string }>`
  flex: none;
  width: 14px;
  height: 14px;
  background: #fff;
  border: 1px solid ${(p) => p.$border};
`;
const Stroke = styled.i`
  flex: none;
  width: 64px;
  height: 1px;
  background: #fff;
`;

const Tool = ({ i, t, gap, caret }: { i: string; t?: string; gap?: number; caret?: boolean }) => (
  <Row $gap={gap}>
    <Small aria-label={t ?? i}>
      <Icon n={i} />
      {t && <Caption>{t}</Caption>}
    </Small>
    {caret && <Caret />}
  </Row>
);
const BigTool = ({ i, t, w, caret }: { i: string; t: string; w: number; caret?: boolean }) => (
  <Big $w={w}>
    <Icon n={i} />
    <BigLabel>{t}</BigLabel>
    {caret && <Caret />}
  </Big>
);
const Title = ({ t, plain, launcher }: { t: string; plain?: boolean; launcher?: boolean }) => (
  <PanelTitle>
    <PanelTitleButton>
      {t}
      {!plain && <Caret $big />}
    </PanelTitleButton>
    {launcher && (
      <Slot $w={10} aria-label="对话框">
        <Icon n="launcher" />
      </Slot>
    )}
  </PanelTitle>
);

/* ---------- document tabs ---------- */

const FileTabs = styled.div`
  display: flex;
  align-items: flex-end;
  height: 30px;
  margin: 0 3px;
  padding-left: 22px;
  border-bottom: 4px solid ${C.bar};
`;
const FileTab = styled.div<{ $bg: string; $w: number }>`
  position: relative;
  display: flex;
  align-items: center;
  justify-content: space-between;
  width: ${(p) => p.$w}px;
  height: 22px;
  padding: 2px 12px 0 10px;
  border-radius: 10px 10px 0 0;
  background: ${(p) => p.$bg};
  &::before,
  &::after {
    content: "";
    position: absolute;
    bottom: 0;
    width: 10px;
    height: 10px;
  }
  &::before {
    left: -10px;
    background: radial-gradient(circle at 0 0, transparent 10px, ${(p) => p.$bg} 10px);
  }
  &::after {
    right: -10px;
    background: radial-gradient(circle at 100% 0, transparent 10px, ${(p) => p.$bg} 10px);
  }
`;
const TabName = styled.button<{ $active?: boolean }>`
  color: ${(p) => (p.$active ? "#fff" : "#b9bdc4")};
  font-weight: ${(p) => (p.$active ? 700 : 400)};
`;
const NewTab = styled.button`
  width: 20px;
  height: 14px;
  margin: 0 0 3px 8px;
  border-radius: 2px 8px 2px 8px;
  background: #323a47;
`;

/* ---------- work area ---------- */

const Main = styled.main`
  display: flex;
  flex: 1;
  min-height: 0;
  margin: 0 3px;
  border-bottom: 1px solid ${C.bar};
`;
const Dock = styled.aside`
  width: 29px;
  flex: none;
  padding-left: 1px;
  background: ${C.bar};
`;
const DockBar = styled.div`
  display: flex;
  flex-direction: column;
  width: 24px;
  border: solid #2a313c;
  border-width: 0 1px 1px 0;
  button {
    width: 22px;
    height: 22px;
  }
`;
const Grip = styled.i`
  width: 14px;
  height: 3px;
  margin: 3px;
  background: repeating-linear-gradient(90deg, ${C.ink} 0 1px, transparent 1px 2px);
  mask: linear-gradient(#000 0 1px, transparent 1px 2px, #000 2px);
`;
const Canvas = styled.div`
  position: relative;
  flex: 1;
  min-width: 0;
  overflow: hidden;
`;
const Drawing = styled.svg`
  position: absolute;
  inset: 0;
  width: 100%;
  height: 100%;
`;
const ViewLabel = styled.button`
  position: absolute;
  left: 3px;
  top: 6px;
  color: #000;
`;
const Prompt = styled.label`
  position: absolute;
  left: 1114px;
  top: 477px;
  display: flex;
  align-items: flex-start;
  gap: 3px;
  color: #000;
`;
const PromptText = styled.span`
  width: 141px;
  height: 25px;
  padding: 2px 3px;
  border: 1px solid #000;
  background: #999;
`;
const PromptBox = styled.span`
  display: flex;
  width: 67px;
  height: 22px;
  padding: 1px 3px;
  border: 1px solid #000;
  background: #fff;
  input {
    width: 52px;
    height: 17px;
    color: #fff;
    background: #0078d7;
  }
`;
const Cube = styled.svg`
  position: absolute;
  right: 14px;
  top: 12px;
`;
const Wcs = styled.button`
  position: absolute;
  right: 60px;
  top: 169px;
  gap: 6px;
  width: 48px;
  height: 18px;
  border: 1px solid #6e7180;
  border-radius: 4px;
  background: #8f91a1;
  color: #5a5d68;
  font: 11px/14px "Liberation Sans", sans-serif;
`;
const NavBar = styled.div`
  position: absolute;
  right: 5px;
  top: 212px;
  width: 32px;
  height: 212px;
  border-radius: 4px;
  background: #5b6064;
  box-shadow: 0 0 0 1px #1a1f26;
`;

/* ---------- command line ---------- */

const Command = styled.div`
  position: absolute;
  left: 377px;
  right: 378px;
  bottom: 0;
`;
const History = styled.div`
  display: flex;
  flex-direction: column;
  align-items: flex-start;
  gap: 5px;
  margin: 0 0 3px 62px;
`;
const HistoryLine = styled.p<{ $bg: string; $ink: string }>`
  height: 15px;
  margin: 0;
  padding: 0 3px;
  border-radius: 2px;
  white-space: pre;
  background: ${(p) => p.$bg};
  color: ${(p) => p.$ink};
  line-height: 15px;
`;
const Mono = styled.span`
  font: 12px/15px "Liberation Mono", monospace;
`;
const Han = styled.span`
  font-size: 13px;
`;
const CommandRow = styled.div`
  display: flex;
  height: 27px;
  background: #2e3542;
  border-radius: 3px 0 0 0;
`;
const CommandTools = styled.div`
  display: flex;
  align-items: center;
  width: 56px;
  padding-left: 4px;
  border-radius: 3px 0 0 3px;
`;
const DotGrip = styled.i`
  width: 5px;
  height: 17px;
  background: radial-gradient(circle at 1px 1px, ${C.ink} 1px, transparent 1px) 0 0 / 3px 3px;
`;
const CommandField = styled.div`
  display: flex;
  flex: 1;
  align-items: center;
  margin: 1px 0;
  padding: 0 3px 0 4px;
  background: #fff;
  color: #000;
  border-radius: 0 2px 2px 0;
  label {
    margin-left: 4px;
    white-space: pre;
  }
  b {
    margin-right: 5px;
    font: 700 12px/15px "Liberation Mono", monospace;
  }
  input {
    flex: 1;
  }
`;
const Ime = styled.div`
  position: absolute;
  left: 1148px;
  bottom: 12px;
  display: flex;
  align-items: center;
  justify-content: center;
  gap: 4px;
  width: 60px;
  height: 25px;
  border-radius: 5px;
  background: #fff;
  color: #444;
  box-shadow: 0 1px 4px #000;
  font: 13px/16px "Liberation Sans", "Noto Sans CJK SC", sans-serif;
`;

/* ---------- bottom bar ---------- */

const Bottom = styled.footer`
  display: flex;
  justify-content: space-between;
  align-items: flex-start;
  height: 28px;
  padding: 0 5px 0 17px;
`;
const LayoutTabs = styled.div`
  display: flex;
  align-items: flex-start;
  gap: 5px;
`;
const LayoutTab = styled.button<{ $active?: boolean }>`
  height: 17px;
  padding: 0 9px;
  border-radius: 0 0 8px 8px;
  background: ${(p) => (p.$active ? C.bar : "#2b323d")};
  color: ${(p) => (p.$active ? "#fff" : "#b9bdc4")};
  font-weight: ${(p) => (p.$active ? 500 : 400)};
`;
const NewLayout = styled(LayoutTab)`
  width: 20px;
  padding: 0;
`;
const Status = styled.div`
  display: flex;
  gap: 3px;
  margin-top: 1px;
`;
const Cluster = styled.div`
  display: flex;
  gap: 1px;
`;
const Block = styled.div`
  display: flex;
  align-items: center;
  height: 24px;
  background: ${C.bar};
  select {
    height: 24px;
    appearance: none;
  }
  option {
    background: ${C.bar};
  }
`;
const Coords = styled.output`
  width: 180px;
  padding-right: 5px;
  text-align: right;
  color: #c0c4ca;
`;
const StatusButton = styled.button<{ $on?: boolean }>`
  width: 24px;
  height: 24px;
  border: 1px solid ${C.bar};
  background: ${(p) => (p.$on ? C.active : "none")};
`;
const Drop = styled.button<{ $w?: number }>`
  width: ${(p) => p.$w ?? 16}px;
  height: 24px;
`;
const ModelButton = styled.button`
  width: 30px;
  height: 24px;
`;
const ScaleSelect = styled.select`
  width: 62px;
  padding-left: 3px;
`;
const UnitSelect = styled.select`
  width: 58px;
  padding-left: 4px;
`;
const Watermark = styled.div`
  position: absolute;
  right: 7px;
  bottom: 8px;
  display: flex;
  gap: 1px;
  opacity: 0.78;
  pointer-events: none;
`;
const WaterText = styled.div`
  display: flex;
  flex-direction: column;
  color: #0c5c9c;
  font: 700 21px/24px "Noto Sans CJK SC", sans-serif;
  span {
    color: #1c8040;
    font: 700 16px/20px "Liberation Sans", sans-serif;
  }
`;

const MENUS = ["文件(F)", "编辑(E)", "视图(V)", "插入(I)", "格式(O)", "工具(T)", "绘图(D)", "标注(N)", "修改(M)", "参数(P)", "Express", "窗口(W)", "帮助(H)"];
const TABS = ["默认", "插入", "注释", "参数化", "视图", "管理", "输出", "附加模块", "协作", "精选应用", "Express Tools"];
const QUICK = ["newFile", "open", "save", "saveAs", "webOpen", "webSave", "print", "undo"];
const DRAW_TOOLS = ["lineBar", "xline", "plineBar", "polygon", "rectBar", "arcBar", "circleBar", "cloud", "spline", "ellipse2", "ellArc", "insertBar", "blkCreate", "points", "hatch", "gradient", "region", "table", "textBar", "addSel"];
const OPTIONS = "输入选项 [打开(O)/合并(J)/宽度(W)/编辑顶点(E)/拟合(F)/样条曲线(S)/非曲线化(D)/线型生成(L)/反转(R)/放弃(U)]: W";

/* Chinese runs and Latin runs of the command line use different faces. */
const Mixed = ({ text }: { text: string }) => (
  <>
    {(text.match(/[\u4e00-\u9fff]+|[^\u4e00-\u9fff]+/g) ?? []).map((run, i) =>
      /[\u4e00-\u9fff]/.test(run) ? <Han key={i}>{run}</Han> : <Mono key={i}>{run}</Mono>
    )}
  </>
);

const ByLayer = ({ pad, gap, label, children }: { pad: number; gap: number; label: string; children: React.ReactNode }) => (
  <Row>
    <Combo $pad={pad} $gap={gap}>
      {children}
      <select aria-label={label}>
        <option>ByLayer</option>
      </select>
      <Caret $big />
    </Combo>
  </Row>
);
const ComboColumn = styled(Column)`
  flex: 1;
  margin-right: 2px;
  ${Combo} {
    flex: 1;
  }
`;

const S = ({ n, on, drop }: { n: string; on?: boolean; drop?: boolean }) => (
  <>
    <StatusButton $on={on} aria-label={n}>
      <Icon n={n} />
    </StatusButton>
    {drop && (
      <Drop aria-label={`${n} 选项`}>
        <Caret $big />
      </Drop>
    )}
  </>
);

export default function App() {
  return (
    <>
      <GlobalStyle />
      <Frame>
        <TitleBar>
          <LogoButton aria-label="应用程序菜单">
            <Icon n="logo" />
            <Caret $big />
          </LogoButton>
          {QUICK.map((n) => (
            <Slot key={n} aria-label={n}>
              <Icon n={n} />
            </Slot>
          ))}
          <Slot $w={12} aria-label="放弃列表"><Caret /></Slot>
          <Slot aria-label="重做"><Icon n="redo" /></Slot>
          <Slot $w={12} aria-label="重做列表"><Caret $color="#8a8f98" /></Slot>
          <Slot $w={16} aria-label="自定义"><Icon n="customise" /></Slot>
          <ShareButton>
            <Icon n="plane" />
            共享
          </ShareButton>
          <TitleText>
            <span>Autodesk AutoCAD 2022</span>
            <span>Drawing2.dwg</span>
          </TitleText>
          <SideTri />
          <SearchInput placeholder="键入关键字或短语" aria-label="搜索" />
          <Slot $w={25} aria-label="搜索"><Icon n="search" /></Slot>
          <LoginButton>
            <Icon n="user" />
            登录
          </LoginButton>
          <Caret />
          <Slot $w={34} aria-label="购物车"><Icon n="cart" /></Slot>
          <Slot $w={18} aria-label="应用商店"><Icon n="appStore" /></Slot>
          <Slot $w={12} aria-label="应用列表"><Caret /></Slot>
          <Divider />
          <Slot aria-label="帮助"><Help>?</Help></Slot>
          <Slot $w={12} aria-label="帮助列表"><Caret /></Slot>
          <WindowButtons>
            <Slot aria-label="最小化"><Icon n="min" /></Slot>
            <Slot aria-label="最大化"><Icon n="max" /></Slot>
            <Slot aria-label="关闭"><Icon n="close" /></Slot>
          </WindowButtons>
        </TitleBar>

        <MenuBar>
          {MENUS.map((m) => (
            <MenuItem key={m}>{m}</MenuItem>
          ))}
          <Spacer />
          <Slot $w={18} aria-label="最小化图形"><Icon n="min" /></Slot>
          <Slot $w={18} aria-label="还原图形"><Icon n="restore" /></Slot>
          <Slot $w={18} aria-label="关闭图形"><Icon n="close" /></Slot>
        </MenuBar>

        <RibbonTabs>
          {TABS.map((t, i) => (
            <RibbonTab key={t} $active={i === 0}>{t}</RibbonTab>
          ))}
          <RibbonToggle aria-label="最小化功能区">
            <ToggleFace><Caret $up $color="#555" /></ToggleFace>
            <Caret />
          </RibbonToggle>
        </RibbonTabs>

        <Ribbon>
          <Panel $w={211}>
            <PanelBody>
              <BigTool i="line32" t="直线" w={40} />
              <BigTool i="pline32" t="多段线" w={40} />
              <BigTool i="circle32" t="圆" w={40} caret />
              <BigTool i="arc32" t="圆弧" w={44} caret />
              <Column $ml={6}>
                <Tool i="rect" caret />
                <Tool i="ellipse" caret />
                <Tool i="hatch" caret />
              </Column>
            </PanelBody>
            <Title t="绘图" />
          </Panel>

          <Panel $w={227}>
            <PanelBody $pad={7}>
              <Column $w={59}>
                <Tool i="move" t="移动" />
                <Tool i="copy" t="复制" />
                <Tool i="stretch" t="拉伸" />
              </Column>
              <Column $w={59}>
                <Tool i="rotate" t="旋转" />
                <Tool i="mirror" t="镜像" />
                <Tool i="scale" t="缩放" />
              </Column>
              <Column $w={75}>
                <Tool i="trim" t="修剪" gap={12} caret />
                <Tool i="fillet" t="圆角" gap={12} caret />
                <Tool i="array" t="阵列" gap={8} caret />
              </Column>
              <Column>
                <Tool i="erase" />
                <Tool i="explode" />
                <Tool i="offset" />
              </Column>
            </PanelBody>
            <Title t="修改" />
          </Panel>

          <Panel $w={156}>
            <PanelBody $pad={4}>
              <BigTool i="text32" t="文字" w={42} caret />
              <BigTool i="dim32" t="标注" w={42} />
              <Column $ml={3}>
                <Tool i="linear" t="线性" caret />
                <Tool i="leader" t="引线" caret />
                <Tool i="table" t="表格" />
              </Column>
            </PanelBody>
            <Title t="注释" />
          </Panel>

          <Panel $w={252}>
            <PanelBody>
              <BigTool i="layers32" t={"图层\n特性"} w={38} />
              <ComboColumn>
                <Row>
                  <Combo $pad={4} $gap={4}>
                    <Icon n="bulb" />
                    <Icon n="sun" />
                    <Icon n="unlock" />
                    <Swatch $border="#000" />
                    <select aria-label="图层">
                      <option>0</option>
                    </select>
                    <Caret $big />
                  </Combo>
                </Row>
                <Column $ml={5}>
                  <Row>
                    {["layOff", "layIso", "layFrz", "layLock"].map((n) => (
                      <Small key={n} aria-label={n}><Icon n={n} /></Small>
                    ))}
                    <Small><Icon n="layCur" /><Caption>置为当前</Caption></Small>
                  </Row>
                  <Row>
                    {["layOn", "layUniso", "layThaw", "layUnlock"].map((n) => (
                      <Small key={n} aria-label={n}><Icon n={n} /></Small>
                    ))}
                    <Small><Icon n="layMatch" /><Caption>匹配图层</Caption></Small>
                  </Row>
                </Column>
              </ComboColumn>
            </PanelBody>
            <Title t="图层" />
          </Panel>

          <Panel $w={134}>
            <PanelBody>
              <BigTool i="insert32" t="插入" w={38} caret />
              <Column $ml={5}>
                <Tool i="blkCreate" t="创建" />
                <Tool i="blkEdit" t="编辑" />
                <Tool i="blkAttr" t="编辑属性" caret />
              </Column>
            </PanelBody>
            <Title t="块" />
          </Panel>

          <Panel $w={244}>
            <PanelBody>
              <BigTool i="match32" t={"特性\n匹配"} w={38} />
              <Column $ml={3} $w={18}>
                <Tool i="wheel" />
                <Tool i="lweight" />
                <Tool i="ltype" />
              </Column>
              <ComboColumn>
                <ByLayer pad={12} gap={12} label="颜色"><Swatch $border="#bbb" /></ByLayer>
                <ByLayer pad={3} gap={3} label="线宽"><Stroke /></ByLayer>
                <ByLayer pad={3} gap={3} label="线型"><Stroke /></ByLayer>
              </ComboColumn>
            </PanelBody>
            <Title t="特性" launcher />
          </Panel>

          <Panel $w={68}>
            <PanelBody>
              <BigTool i="group32" t="组" w={38} />
              <Column $ml={5}>
                <Tool i="ungroup" />
                <Tool i="groupEdit" />
                <Row><Small $on aria-label="组选择"><Icon n="groupSel" /></Small></Row>
              </Column>
            </PanelBody>
            <Title t="组" />
          </Panel>

          <Panel $w={76}>
            <PanelBody $pad={6}>
              <BigTool i="ruler32" t="测量" w={38} caret />
              <Column $ml={9}>
                <Tool i="quickSel" />
                <Tool i="selAll" />
                <Tool i="calc" />
              </Column>
            </PanelBody>
            <Title t="实用工具" />
          </Panel>

          <Panel $w={76}>
            <PanelBody $pad={6}>
              <BigTool i="paste32" t="粘贴" w={38} caret />
              <Column $ml={9}>
                <Tool i="cut" />
                <Tool i="copyClip" />
              </Column>
            </PanelBody>
            <Title t="剪贴板" plain />
          </Panel>
        </Ribbon>

        <FileTabs>
          <FileTab $bg="#2f3743" $w={123}>
            <TabName>开始</TabName>
          </FileTab>
          <FileTab $bg={C.bar} $w={123}>
            <TabName $active>Drawing2*</TabName>
            <button aria-label="关闭标签"><Icon n="tabClose" /></button>
          </FileTab>
          <NewTab aria-label="新建标签"><Icon n="tabPlus" /></NewTab>
        </FileTabs>

        <Main>
          <Dock>
            <DockBar>
              <Grip />
              {DRAW_TOOLS.map((n) => (
                <button key={n} aria-label={n}><Icon n={n} /></button>
              ))}
            </DockBar>
          </Dock>
          <Canvas>
            <Drawing fill="none" stroke="#fff">
              <g shapeRendering="crispEdges">
                <circle cx="413" cy="266" r="143" />
                <rect x="700" y="197" width="398" height="218" strokeWidth="12" />
                <path d="M1231 350C1260 292 1287 243 1318 243C1369 243 1412 370 1463 370C1512 370 1553 225 1601 225C1650 225 1695 375 1740 375C1770 375 1791 306 1807 247" />
                <path d="M1050 460.500h97M1098.500 421v88" />
                <path d="M19.500 735v49.500H70M16.500 779.500h8v8h-8z" />
              </g>
              <path d="M21 718l6 6 6-6M27.500 724v7M74 770l13 13M87 770l-13 13" />
              <path d="M1288 515l-6 25 4-1-2 72h3l1-72 5 2z" fill="#f00" stroke="none" />
            </Drawing>
            <ViewLabel>[−][俯视][二维线框]</ViewLabel>
            <Prompt>
              <PromptText>指定所有线段的新宽度:</PromptText>
              <PromptBox><input defaultValue="878.2932" /></PromptBox>
            </Prompt>

            <Cube width="140" height="140" viewBox="0 0 140 140">
              <circle cx="70" cy="70" r="53.500" fill="none" stroke="#42484f" strokeWidth="13" />
              <rect x="44.500" y="44.500" width="51" height="51" fill="#aaacad" stroke="#6c6f72" />
              <rect x="54" y="54" width="32" height="32" fill="#9da5ab" />
              <g fontFamily="Noto Sans CJK SC" textAnchor="middle" fontSize="18" fill="#b4b4b4">
                <text x="70" y="21">北</text>
                <text x="13" y="77">西</text>
                <text x="126" y="77">东</text>
                <text x="70" y="135">南</text>
                <text x="70" y="81" fontSize="30" fill="#4c555f">上</text>
              </g>
            </Cube>
            <Wcs>
              WCS
              <svg width="9" height="6" fill="none" stroke="#c4c6d0"><path d="M1 .5h7l-3.500 4z" /></svg>
            </Wcs>
            <NavBar>
              <svg width="32" height="212" fill="none" stroke="#41464c" aria-label="导航栏">
                <circle cx="26" cy="5" r="3.500" fill="#484d52" />
                <path d="M24 3l4 4M28 3l-4 4" stroke="#6b7074" />
                <path d="M16 19.500h10.500V30a10.500 10.500 0 1 1-10.500-10.500z" />
                <circle cx="16" cy="30" r="6" />
                <path d="M10 38c2-3 3-3 3-3M22 38c-2-3-3-3-3-3" />
                <path d="M13.500 50h6l-3 3zM13.500 120h6l-3 3zM13.500 158h6l-3 3z" fill="#41464c" stroke="none" />
                <path d="M4 56.500h25M4 164.500h25" stroke="#6b7074" />
                <path d="M10 83c-1-3-6-8-5-9s3 1 5 3l-1-11c0-2 2-2 2 0l2 7V62c0-2 3-2 3 0v10l2-9c0-2 3-2 2 0l-1 10 4-6c1-1 3 0 2 1l-4 9c-1 3-2 4-3 6z" strokeWidth="1.200" />
                <path d="M5 90l14 14M19 90L5 104M4 94v-5h5M15 89h5v5M9 105H4v-5" />
                <circle cx="20" cy="104" r="5" />
                <path d="M23 107l4 4" strokeWidth="3" />
                <path d="M14.500 148v-16h-2l3.500-4 3.500 4h-2v16zM12 135c-10 2-10 8 1 9M20 135c9 2 9 7 0 9M10 141l-4 3 4 3" strokeWidth="1.200" />
                <path d="M4.500 169.500h6v6h-6zM12.500 169.500h6v6h-6zM20.500 169.500h6v6h-6zM4.500 179.500h16v12h-16z" />
                <path d="M9 181v8l7-4z" fill="#41464c" />
                <circle cx="26" cy="206" r="3.500" />
                <path d="M24 206h4" />
              </svg>
            </NavBar>

            <Command>
              <History>
                <HistoryLine $bg="#4d5052" $ink="#a0a3a6"><Mixed text={OPTIONS} /></HistoryLine>
                <HistoryLine $bg="#565859" $ink="#c8cacb"><Mixed text="指定所有线段的新宽度: 15" /></HistoryLine>
                <HistoryLine $bg="#636465" $ink="#f0f0f0"><Mixed text={OPTIONS} /></HistoryLine>
              </History>
              <CommandRow>
                <CommandTools>
                  <DotGrip />
                  <Slot $w={20} aria-label="关闭命令行"><Icon n="tabClose" /></Slot>
                  <Slot $w={26} aria-label="自定义命令行"><Icon n="wrench" /></Slot>
                </CommandTools>
                <CommandField>
                  <Icon n="pedit" />
                  <Slot $w={13} aria-label="最近命令"><Caret $big $color="#555" /></Slot>
                  <label htmlFor="command"><b>PEDIT</b><Mixed text="指定所有线段的新宽度:" /></label>
                  <input id="command" />
                  <Caret $big $up $color="#555" />
                </CommandField>
              </CommandRow>
            </Command>
            <Ime>
              EN
              <svg width="12" height="14" fill="none" stroke="#444"><path d="M5 1c3 5 1 9-4 11 7 2 12-6 4-11z" strokeWidth="1.200" /></svg>
              简
            </Ime>
          </Canvas>
        </Main>

        <Bottom>
          <LayoutTabs>
            <LayoutTab $active>模型</LayoutTab>
            <LayoutTab>布局1</LayoutTab>
            <LayoutTab>布局2</LayoutTab>
            <NewLayout aria-label="新建布局"><Icon n="tabPlus" /></NewLayout>
          </LayoutTabs>
          <Status>
            <Block><Coords>1207.6968, 551.7623, 0.0000</Coords></Block>
            <Block><ModelButton>模型</ModelButton></Block>
            <Block><S n="grid" /><S n="snap" drop /></Block>
            <Cluster>
              <Block><S n="infer" /></Block>
              <Block><S n="dyn" on /></Block>
              <Block><S n="ortho" /><S n="polar" drop /><S n="iso" drop /></Block>
              <Block><S n="otrack" on /><S n="osnap" drop /></Block>
              <Block><S n="lwt" /></Block>
              <Block><S n="transp" on /></Block>
              <Block><S n="cycle" /></Block>
              <Block><S n="osnap3d" drop /></Block>
            </Cluster>
            <Block><S n="ucs" on /><S n="filter" drop /><S n="gizmo" on drop /></Block>
            <Block>
              <S n="annoVis" on /><S n="annoAuto" /><S n="annoScale" />
              <ScaleSelect aria-label="注释比例"><option>1:1 / 100%</option></ScaleSelect>
              <Drop $w={12} aria-label="注释比例列表"><Caret $big /></Drop>
            </Block>
            <Cluster>
              <Block><S n="gear" drop /></Block>
              <Block><S n="plus" /></Block>
            </Cluster>
            <Cluster>
              <Block>
                <S n="units" />
                <UnitSelect aria-label="单位"><option>小数</option></UnitSelect>
                <Drop aria-label="单位列表"><Caret $big /></Drop>
              </Block>
              <Block><S n="props" /></Block>
            </Cluster>
            <Cluster>
              <Block><S n="lockUi" drop /></Block>
              <Block><S n="isolate" /></Block>
            </Cluster>
            <Block><S n="perf" on /></Block>
            <Block><S n="clean" /><S n="menu" /></Block>
          </Status>
        </Bottom>

        <Watermark>
          <svg width="42" height="42" viewBox="0 0 42 42">
            <path d="M42 1C22-2 2 8 0 27c3 6 6 5 7 1C8 16 20 5 42 1z" fill="#0f7ab8" />
            <path d="M4 33c-2-12 10-20 24-20-12 3-20 8-20 15 0 4-2 6-4 5z" fill="#0c5c9c" />
            <path d="M12 20c10-8 30-8 28 4-2 11-20 16-37 16 16-3 28-8 28-15 0-6-10-7-19-5z" fill="#1c8a3c" />
            <path d="M3 40c10-1 18-4 22-8-6 6-14 8-22 8z" fill="#b4a83c" stroke="#b4a83c" />
          </svg>
          <WaterText>
            极光下载站
            <span>www.xz7.com</span>
          </WaterText>
        </Watermark>
      </Frame>
    </>
  );
}
